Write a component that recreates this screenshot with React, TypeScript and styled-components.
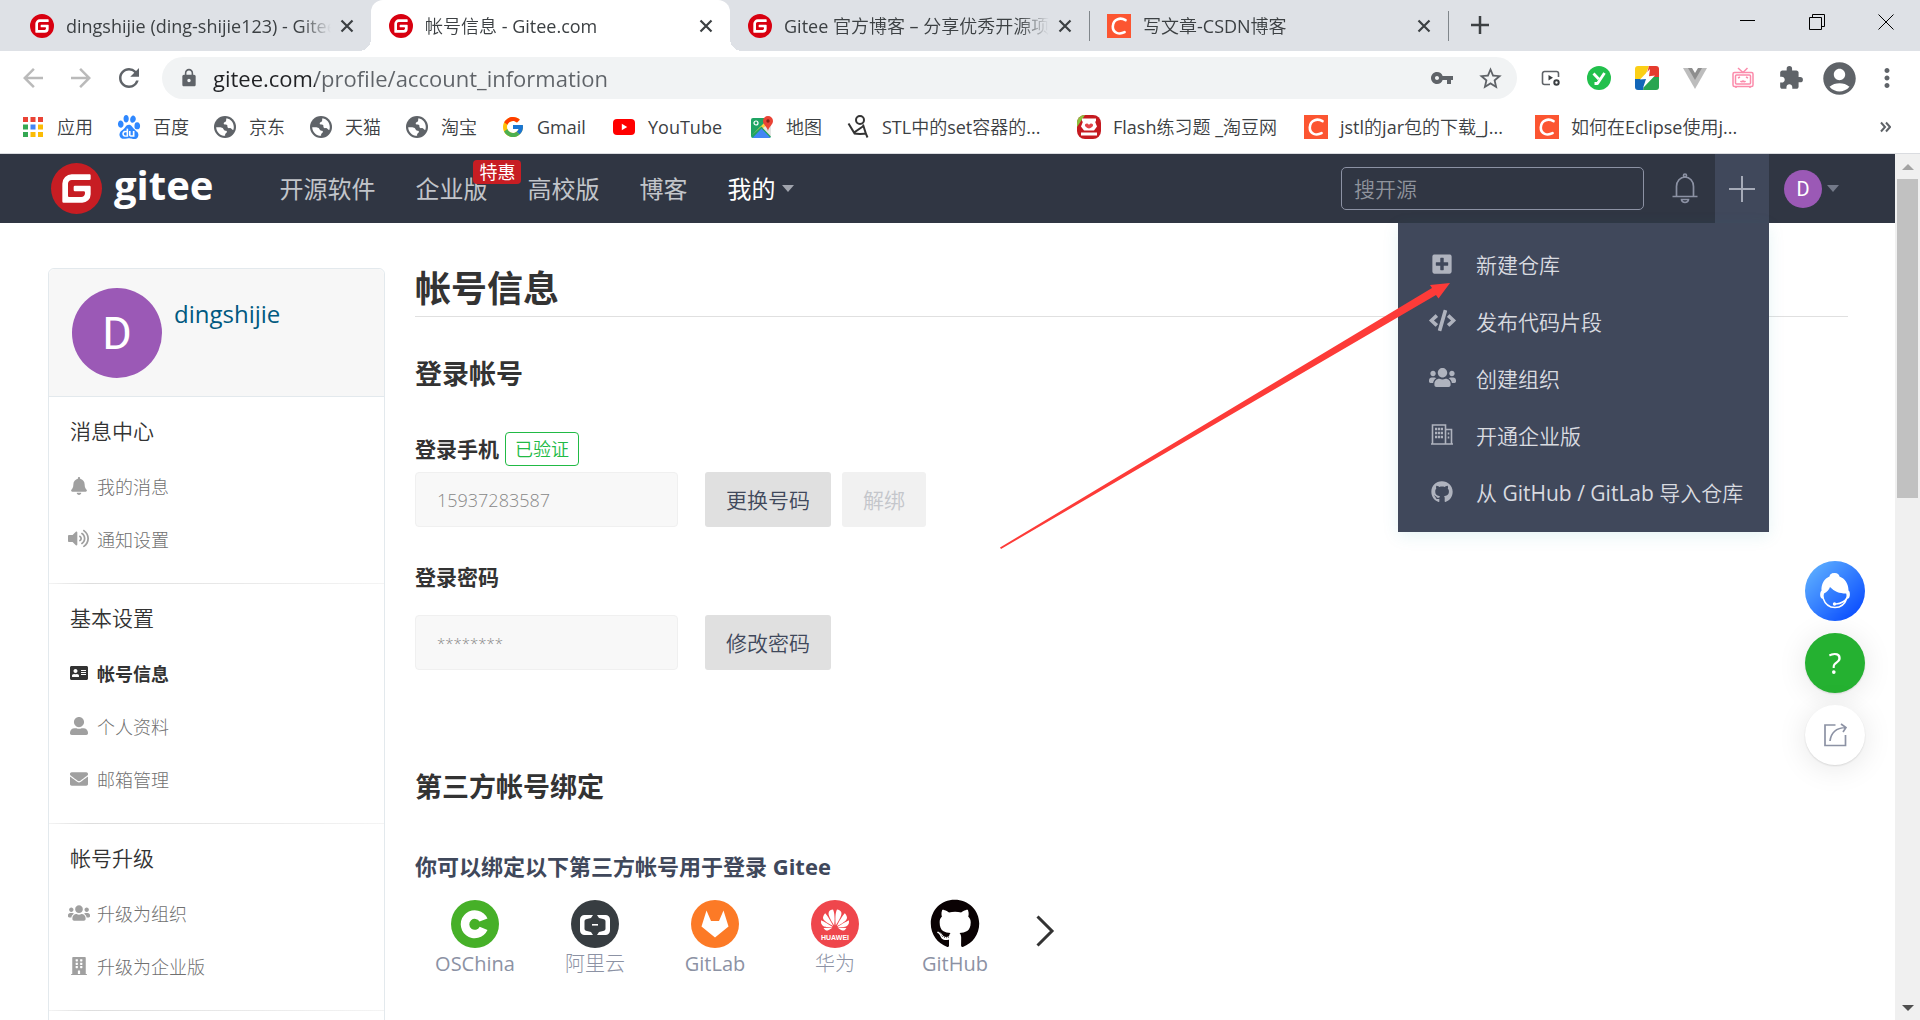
import React from "react";
import styled, { createGlobalStyle } from "styled-components";
import { SiGitee, SiBaidu, SiHuawei } from "react-icons/si";
import {
  FaUsers,
  FaAddressCard,
  FaBuilding,
  FaUserAlt,
  FaGithub,
  FaBell,
  FaVolumeUp,
  FaEnvelope,
  FaPlusSquare,
  FaCode,
} from "react-icons/fa";
import {
  MdArrowBack,
  MdArrowForward,
  MdRefresh,
  MdLock,
  MdVpnKey,
  MdStarBorder,
  MdExtension,
  MdAccountCircle,
  MdMoreVert,
} from "react-icons/md";
import { FcGoogle } from "react-icons/fc";

const REGULAR = '"Open Sans", "Noto Sans CJK SC", sans-serif';
const LIGHT = '"Open Sans", "Noto Sans CJK SC Light", "Noto Sans CJK SC", sans-serif';
const DEMI = '"Open Sans", "Noto Sans CJK SC DemiLight", "Noto Sans CJK SC", sans-serif';

const GlobalStyle = createGlobalStyle`
  *, *::before, *::after { box-sizing: border-box; }
  body { margin: 0; background: #fff; font-family: ${LIGHT}; color: #333; overflow: hidden; }
  button { font: inherit; color: inherit; background: none; border: 0; padding: 0; cursor: pointer; }
  a { color: inherit; text-decoration: none; }
  h1, h2, h3, p, ul { margin: 0; padding: 0; }
  ul { list-style: none; }
  svg { display: block; flex: none; }
`;

const Window = styled.div`
  display: flex;
  flex-direction: column;
  height: 100vh;
`;

/* ---------- browser chrome ---------- */

const TabStrip = styled.div`
  display: flex;
  align-items: stretch;
  height: 51px;
  flex: none;
  padding-left: 12px;
  background: #dee1e6;
  color: #3c4043;
  font-family: ${DEMI};
`;

const Tab = styled.div<{ $active?: boolean }>`
  position: relative;
  display: flex;
  align-items: center;
  flex: 0 1 359px;
  min-width: 0;
  height: 51px;
  padding: 0 14px 0 18px;
  background: ${(p) => (p.$active ? "#fff" : "transparent")};
  border-radius: 12px 12px 0 0;

  &::before,
  &::after {
    content: "";
    display: ${(p) => (p.$active ? "block" : "none")};
    position: absolute;
    bottom: 0;
    width: 12px;
    height: 12px;
  }
  &::before {
    right: 100%;
    background: radial-gradient(circle at 0 0, transparent 12px, #fff 12px);
  }
  &::after {
    left: 100%;
    background: radial-gradient(circle at 100% 0, transparent 12px, #fff 12px);
  }
`;

const TabTitle = styled.button`
  flex: 1;
  min-width: 0;
  margin: 0 6px 0 12px;
  overflow: hidden;
  white-space: nowrap;
  text-align: left;
  font-size: 18px;
  line-height: 28px;
  mask-image: linear-gradient(to left, transparent 0, #000 30px);
`;

const TabClose = styled.button`
  display: grid;
  place-items: center;
  width: 20px;
  height: 20px;
`;

const TabDivider = styled.span`
  width: 1px;
  height: 30px;
  margin: 11px -1px 0 0;
  background: #80868b;
`;

const NewTab = styled.button`
  display: grid;
  place-items: center;
  width: 30px;
  height: 50px;
  margin-left: 17px;
`;

const WindowControls = styled.div`
  display: flex;
  margin-left: auto;
`;

const WindowButton = styled.button`
  display: grid;
  place-items: center;
  width: 69px;
  height: 43px;
`;

const RedC = styled.span`
  display: grid;
  place-items: center;
  flex: none;
  width: 24px;
  height: 24px;
  background: #fc5531;
`;

const GiteeBadge = styled.span<{ $size: number; $color: string }>`
  display: block;
  flex: none;
  color: ${(p) => p.$color};
  background: radial-gradient(circle, #fff 55%, transparent 56%);
  svg {
    width: ${(p) => p.$size}px;
    height: ${(p) => p.$size}px;
  }
`;

const Toolbar = styled.div`
  display: flex;
  align-items: center;
  flex: none;
  height: 54px;
  padding: 0 9px 0 18px;
  color: #5f6368;
`;

const ToolButton = styled.button<{ $dim?: boolean }>`
  display: grid;
  place-items: center;
  width: 48px;
  height: 40px;
  color: ${(p) => (p.$dim ? "#bababa" : "#5f6368")};
`;

const NavButtons = styled.div`
  display: flex;
  margin-left: -9px;
  width: 153px;
`;

const Omnibox = styled.div`
  display: flex;
  align-items: center;
  flex: 1;
  height: 42px;
  padding: 0 3px 0 17px;
  border-radius: 21px;
  background: #f1f3f4;
`;

const Address = styled.input`
  flex: 1;
  min-width: 0;
  height: 36px;
  margin-left: 14px;
  padding: 0;
  border: 0;
  outline: 0;
  font-family: ${LIGHT};
  font-size: 22px;
  color: transparent;
  background: linear-gradient(to right, #202124 102px, #5f6368 102px);
  background-clip: text;
`;

const Extensions = styled.div`
  display: flex;
  align-items: center;
  margin-left: 10px;
`;

const Bookmarks = styled.nav`
  display: flex;
  align-items: center;
  flex: none;
  height: 49px;
  padding: 0 29px 4px 21px;
  border-bottom: 1px solid #dadce0;
  color: #3c4043;
  font-family: ${DEMI};
`;

const Bookmark = styled.a<{ $w: number }>`
  display: flex;
  align-items: center;
  gap: 12px;
  margin-right: 24px;
  font-size: 18px;
  line-height: 28px;
  white-space: nowrap;

  span.label {
    width: ${(p) => p.$w}px;
  }
`;

const IconSlot = styled.span`
  display: grid;
  place-items: center;
  flex: none;
  width: 24px;
  height: 24px;
`;

const Overflow = styled.button`
  margin-left: auto;
`;

/* ---------- page ---------- */

const Viewport = styled.div`
  display: flex;
  flex: 1;
  min-height: 0;
`;

const Page = styled.div`
  flex: 1;
  min-width: 0;
  overflow: hidden;
`;

const Header = styled.header`
  position: relative;
  z-index: 2;
  display: flex;
  align-items: center;
  height: 69px;
  padding-left: 51px;
  background: #303643;
  color: #d0d2d6;
`;

const Brand = styled.a`
  display: flex;
  align-items: center;
  gap: 12px;
  margin-right: 66px;
  color: #fff;
  font-size: 40px;
  font-weight: 700;
  line-height: 51px;
`;

const BrandName = styled.span`
  line-height: 46px;
  padding-bottom: 8px;
`;

const MainNav = styled.nav`
  display: flex;
  flex: 1;
  gap: 40px;
  font-family: ${DEMI};
  font-size: 24px;
  line-height: 69px;
`;

const NavLink = styled.a<{ $strong?: boolean }>`
  position: relative;
  display: flex;
  align-items: center;
  gap: 7px;
  white-space: nowrap;
  font-family: ${REGULAR};
  color: ${(p) => (p.$strong ? "#fff" : "#c2c5ca")};
`;

const Promo = styled.span`
  position: absolute;
  top: 6px;
  left: 58px;
  padding: 0 6px;
  border-radius: 4px;
  background: #c71d23;
  color: #fff;
  font-size: 18px;
  line-height: 24px;
`;

const Caret = styled.span<{ $dim?: boolean }>`
  border: solid transparent;
  border-width: 7px 6px 0;
  border-top-color: ${(p) => (p.$dim ? "#737989" : "#a0a4ad")};
`;

const Search = styled.input`
  width: 303px;
  height: 43px;
  padding: 0 12px;
  border: 1px solid #8c92a4;
  border-radius: 5px;
  outline: 0;
  background: transparent;
  color: #fff;
  font-family: ${DEMI};
  font-size: 21px;
  &::placeholder {
    color: #8f939c;
  }
`;

const BellButton = styled.button`
  margin: 0 17px 0 28px;
  color: #8c92a4;
`;

const CreateMenu = styled.div`
  position: relative;
`;

const PlusButton = styled.button`
  display: grid;
  place-items: center;
  width: 54px;
  height: 69px;
  background: #40485b;
`;

const Dropdown = styled.ul`
  position: absolute;
  top: 100%;
  right: 0;
  padding: 12px 0;
  width: 371px;
  background: #40485b;
  box-shadow: 0 4px 16px rgba(0, 150, 160, 0.1);
`;

const DropdownItem = styled.a`
  display: flex;
  align-items: center;
  gap: 20px;
  height: 57px;
  padding-left: 30px;
  font-family: ${DEMI};
  font-size: 21px;
  color: #d9dbe0;
  white-space: nowrap;
`;

const MenuIcon = styled.span`
  display: grid;
  place-items: center;
  width: 28px;
  color: #afb3be;
`;

const AccountButton = styled.button`
  display: flex;
  align-items: center;
  gap: 5px;
  margin: 0 56px 0 15px;
`;

const Avatar = styled.span<{ $size: number; $font: number }>`
  display: grid;
  place-items: center;
  flex: none;
  width: ${(p) => p.$size}px;
  height: ${(p) => p.$size}px;
  border-radius: 50%;
  background: #9b59b6;
  color: #fff;
  font-family: Roboto, sans-serif;
  font-size: ${(p) => p.$font}px;
  line-height: 1;
`;

const Body = styled.div`
  display: flex;
  align-items: flex-start;
  gap: 30px;
  padding: 45px 47px 0 48px;
`;

const Sidebar = styled.aside`
  flex: none;
  width: 337px;
  padding-bottom: 60px;
  border: 1px solid #e3e9ed;
  border-radius: 6px;
`;

const Profile = styled.div`
  display: flex;
  gap: 12px;
  height: 128px;
  padding: 19px 23px;
  border-bottom: 1px solid #e3e9ed;
  border-radius: 6px 6px 0 0;
  background: #f7f7f7;
`;

const ProfileName = styled.a`
  padding-top: 8px;
  font-size: 24px;
  line-height: 36px;
  color: #005980;
`;

const MenuGroup = styled.section`
  padding: 20px 0 18px 19px;
  border-bottom: 1px solid;
  border-image: linear-gradient(to right, #f4f4f4, #dedede 12%, #f4f4f4) 1;
`;

const GroupTitle = styled.h3`
  margin: 0 0 14px 2px;
  font-family: ${DEMI};
  font-size: 21px;
  font-weight: 400;
  line-height: 28px;
`;

const MenuItem = styled.a<{ $active?: boolean }>`
  display: flex;
  align-items: center;
  gap: 8px;
  height: 53px;
  font-size: 18px;
  font-family: ${(p) => (p.$active ? REGULAR : LIGHT)};
  font-weight: ${(p) => (p.$active ? 700 : 400)};
  color: ${(p) => (p.$active ? "#333" : "#707070")};

  span {
    display: grid;
    place-items: center;
    width: 21px;
    color: ${(p) => (p.$active ? "#333" : "#a0a0a0")};
  }
`;

const Content = styled.main`
  flex: 1;
  min-width: 0;
  font-family: ${REGULAR};
`;

const Title = styled.h1`
  padding-bottom: 6px;
  border-bottom: 1px solid #e0e0e0;
  font-size: 36px;
  line-height: 42px;
`;

const Heading = styled.h2<{ $top: number; $bottom: number }>`
  margin: ${(p) => p.$top}px 0 ${(p) => p.$bottom}px;
  font-size: 27px;
  line-height: 36px;
`;

const FieldLabel = styled.div<{ $gap: number }>`
  display: flex;
  align-items: center;
  gap: 6px;
  height: 34px;
  margin-bottom: ${(p) => p.$gap}px;
  font-size: 21px;
  font-weight: 700;

  label {
    padding-bottom: 2px;
  }
`;

const Verified = styled.span`
  padding: 0 9px;
  border: 1px solid #21ba45;
  border-radius: 4px;
  color: #21ba45;
  font-family: ${DEMI};
  font-size: 18px;
  font-weight: 400;
  line-height: 32px;
`;

const FieldRow = styled.div`
  display: flex;
  gap: 11px;
  margin-bottom: 33px;
`;

const ReadOnlyInput = styled.input<{ $masked?: boolean }>`
  width: 263px;
  height: 55px;
  margin-right: 16px;
  padding: 0 21px;
  border: 1px solid #f0f0f0;
  border-radius: 4px;
  outline: 0;
  background: #f8f8f8;
  color: #888;
  font-family: ${LIGHT};
  font-size: ${(p) => (p.$masked ? 15 : 18)}px;
  font-weight: 300;
`;

const ActionButton = styled.button`
  height: 55px;
  padding: 0 21px 2px;
  border-radius: 3px;
  background: #e0e0e0;
  color: #40485b;
  font-family: ${DEMI};
  font-size: 21px;
  &:disabled {
    background: #f1f1f1;
    color: #c4c6cb;
  }
`;

const Hint = styled.h3`
  margin-bottom: 20px;
  font-size: 22px;
  line-height: 28px;
  color: #40485b;
`;

const Providers = styled.div`
  display: flex;
  align-items: flex-start;
`;

const Provider = styled.a`
  display: flex;
  flex-direction: column;
  align-items: center;
  gap: 2px;
  width: 120px;
  font-family: ${LIGHT};
  font-size: 20px;
  line-height: 28px;
  color: #8c92a4;
`;

const Disc = styled.span<{ $bg: string }>`
  display: flex;
  flex-direction: column;
  align-items: center;
  justify-content: center;
  width: 48px;
  height: 48px;
  border-radius: 50%;
  background: ${(p) => p.$bg};
  color: #fff;
`;

const HuaweiWord = styled.span`
  font-family: "Liberation Sans", sans-serif;
  font-size: 7px;
  font-weight: 700;
  line-height: 8px;
`;

const NextButton = styled.button`
  display: grid;
  place-items: center;
  height: 62px;
  margin-left: 20px;
`;

/* ---------- overlays ---------- */

const FloatingTools = styled.div`
  position: fixed;
  right: 55px;
  top: 561px;
  display: flex;
  flex-direction: column;
  gap: 12px;
`;

const FloatButton = styled.button<{ $bg: string; $shadow?: boolean }>`
  display: grid;
  place-items: center;
  width: 60px;
  height: 60px;
  border-radius: 50%;
  background: ${(p) => p.$bg};
  color: #fff;
  font-family: "Open Sans", sans-serif;
  font-size: 30px;
  line-height: 1;
  box-shadow: ${(p) =>
    p.$shadow ? "0 1px 2px rgba(0,0,0,.12), 0 3px 30px rgba(0,0,0,.1)" : "none"};
`;

const Annotation = styled.svg`
  position: fixed;
  z-index: 5;
  left: 1000px;
  top: 282px;
  pointer-events: none;
`;

const ScrollTrack = styled.div`
  display: flex;
  flex-direction: column;
  justify-content: space-between;
  align-items: center;
  width: 25px;
  background: #f0f0f0;
`;

const ScrollThumb = styled.div`
  width: 21px;
  height: 319px;
  margin: 0 auto;
  background: #c1c1c1;
`;

const ScrollButton = styled.button<{ $down?: boolean }>`
  display: grid;
  place-items: center;
  width: 25px;
  height: 25px;
  &::before {
    content: "";
    border: solid transparent;
    border-width: ${(p) => (p.$down ? "6px 6px 0" : "0 6px 6px")};
    border-top-color: ${(p) => (p.$down ? "#505050" : "transparent")};
    border-bottom-color: ${(p) => (p.$down ? "transparent" : "#a3a3a3")};
  }
`;

/* ---------- drawings ---------- */

const CloseGlyph = () => (
  <svg width="14" height="14" viewBox="0 0 14 14" stroke="#3c4043" strokeWidth="2.2">
    <path d="M1.5 1.5l11 11M12.5 1.5l-11 11" />
  </svg>
);

const CMark = () => (
  <RedC>
    <svg width="24" height="24" viewBox="0 0 24 24" fill="none" stroke="#fff" strokeWidth="2.6">
      <path d="M18.5 6.2C14 3.4 6.4 4.2 5.8 12.3c-.3 7 6.6 8.6 11.8 5.9" strokeLinecap="round" />
    </svg>
  </RedC>
);

const GiteeIcon = () => (
  <GiteeBadge $size={24} $color="#d80010">
    <SiGitee />
  </GiteeBadge>
);

const AppsIcon = () => {
  const colors = ["#ea4335", "#ea4335", "#ea4335", "#34a853", "#4285f4", "#fbbc05", "#34a853", "#fbbc05", "#fbbc05"];
  return (
    <svg width="20" height="20" viewBox="0 0 20 20">
      {colors.map((c, i) => (
        <rect key={i} x={(i % 3) * 7.5} y={Math.floor(i / 3) * 7.5} width="5" height="5" fill={c} />
      ))}
    </svg>
  );
};

const GlobeIcon = () => (
  <svg width="22" height="22" viewBox="0 0 22 22">
    <circle cx="11" cy="11" r="11" fill="#5f6368" />
    <path
      d="M12.5 2.2C16.8 3 19.8 6.6 19.8 11c0 1-.2 2-.5 2.9-1.3-.1-1.4-1.3-2.6-1.7-1-.3-2.3.4-3-.6-.7-1 .2-2-.7-2.7-1.2-.8-3.2.3-3.3-1.5 0-1 1.3-1.1 2-1.8.8-.8.2-2.5.8-3.4z"
      fill="#fff"
    />
    <path
      d="M2.2 11.2c2.3.2 4.9-.5 6.5.9 1 .8.7 2 2 2.3 1 .3 2 0 2.2 1.1.2 1.5-1.7 1.6-1.8 3.1v1.2C6.3 19.9 2.3 16 2.2 11.2z"
      fill="#fff"
    />
  </svg>
);

const YouTubeIcon = () => (
  <svg width="24" height="18" viewBox="0 0 24 18">
    <rect x="1" y="1" width="22" height="16" rx="4" fill="#f00" />
    <path d="M9.8 5.8v6.4l5.4-3.2z" fill="#fff" />
  </svg>
);

const MapsIcon = () => (
  <svg width="24" height="24" viewBox="0 0 24 24">
    <rect x="1" y="3" width="20" height="20" rx="2" fill="#1fa463" />
    <path d="M1 21L19 3h2v18L11.5 11.5z" fill="#fbd043" />
    <path d="M2.5 23L11.5 13.5l9 9.5z" fill="#4285f4" />
    <path d="M13 13l8 8.5V7z" fill="#e4e4e4" />
    <circle cx="6" cy="8" r="2" fill="none" stroke="#fff" strokeWidth="1.2" />
    <path d="M18 1a5 5 0 0 1 5 5c0 4-4 5-5 10-1-5-5-6-5-10a5 5 0 0 1 5-5z" fill="#e94335" />
    <circle cx="18" cy="6" r="1.7" fill="#8a1f16" />
  </svg>
);

const BlogIcon = () => (
  <svg width="24" height="24" viewBox="0 0 24 24" fill="none" stroke="#333" strokeWidth="2">
    <circle cx="14" cy="5" r="4" />
    <path d="M2.5 8.5L8 17.5l9.5-6.5M17 9.5c1.5 4 2 8 4.5 13M8 18.5c4 .7 9 .3 12.5.2" />
  </svg>
);

const DocinIcon = () => (
  <svg width="24" height="24" viewBox="0 0 24 24">
    <rect width="24" height="24" rx="8" fill="#c51a20" />
    <path d="M0 12V8a8 8 0 0 1 8-8z" fill="#8ac23e" />
    <path d="M5 3.5h14v3H5zM6 6.5h12l2 5-3 4H7l-3-4zM4 17.5h16v3H4z" fill="#fff" />
    <path d="M8 9.500c1.500-1.500 3-1 4 .5 1-1.500 2.500-2 4-.5.500 2-2 3.500-4 4-2-.5-4.500-2-4-4z" fill="#e2454a" />
  </svg>
);

const CastIcon = () => (
  <svg width="20" height="18" viewBox="0 0 20 18" fill="none" stroke="#5f6368" strokeWidth="1.6">
    <path d="M9 15.5H3.5a2 2 0 0 1-2-2v-9a2 2 0 0 1 2-2h12a2 2 0 0 1 2 2V8" />
    <path d="M7.5 6v5.5L12 8.8z" fill="#3c4043" stroke="none" />
    <circle cx="15.5" cy="13.5" r="2.2" stroke="#3c4043" strokeWidth="2" />
  </svg>
);

const GreenY = () => (
  <svg width="24" height="24" viewBox="0 0 24 24">
    <circle cx="12" cy="12" r="12" fill="#22c04c" />
    <path d="M6.5 7.5l5.2 5.5M17.5 7l-7 10.5H7.5" fill="none" stroke="#fff" strokeWidth="2.8" strokeLinejoin="round" />
  </svg>
);

const BoltIcon = () => (
  <svg width="24" height="24" viewBox="0 0 24 24">
    <path d="M3 0h11l-5 13H0V3a3 3 0 0 1 3-3z" fill="#fbcf16" />
    <path d="M14 0h7a3 3 0 0 1 3 3v8H11z" fill="#e53b2e" />
    <path d="M0 13h12l-4 11H3a3 3 0 0 1-3-3z" fill="#1266b8" />
    <path d="M12 11h12v10a3 3 0 0 1-3 3H8z" fill="#28a550" />
    <path d="M15 3L5 13.5l6-.5-3 9L20 9.5l-6 .8z" fill="#fff" />
  </svg>
);

const VueIcon = () => (
  <svg width="24" height="21" viewBox="0 0 24 21">
    <path d="M0 0h24L12 21z" fill="#bdbdbd" />
    <path d="M5 0h14l-7 12z" fill="#8e8e8e" />
    <path d="M9 0h6l-3 5z" fill="#fff" />
  </svg>
);

const TvIcon = () => (
  <svg width="22" height="22" viewBox="0 0 22 22" fill="none" stroke="#fb8bab" strokeWidth="1.5">
    <path d="M6 1l5 4.500L15.500 1M4 19v2M18 19v2" />
    <rect x="1" y="5.5" width="20" height="14" rx="1.5" />
    <rect x="3.5" y="8" width="15" height="9" rx="1" />
    <path d="M6 11l2-1M16 11l-2-1M8.5 14c.8 1 1.7 1 2.5 0 .8 1 1.7 1 2.5 0" />
  </svg>
);

const BellOutline = () => (
  <svg width="26" height="31" viewBox="0 0 26 31" fill="none" stroke="currentColor" strokeWidth="1.7">
    <circle cx="13" cy="2.5" r="1.5" />
    <path d="M4.5 23.5v-10a8.500 9.500 0 0 1 17 0v10M.5 23.500h25M9.500 26.500h7a3.500 3 0 0 1-7 0z" />
  </svg>
);

const EnterpriseIcon = () => (
  <svg width="22" height="21" viewBox="0 0 22 21" fill="none" stroke="currentColor" strokeWidth="1.6">
    <path d="M0 20h22M1.500 20V1h13v19M14.500 5.500h6V20" />
    <path d="M4 5h8M4 9h8M4 13h8" strokeWidth="2.4" strokeDasharray="2.2 .7" />
    <path d="M17.500 8.500v2M17.500 12.500v2" />
  </svg>
);

const OscIcon = () => (
  <svg width="48" height="48" viewBox="0 0 48 48">
    <path d="M36.500 18.500A14 14 0 1 0 36.500 30l-7.800-3.200a5.500 5.500 0 1 1-.2-5.300z" fill="#fff" />
  </svg>
);

const AliyunIcon = () => (
  <svg width="48" height="48" viewBox="0 0 48 48" fill="#fff">
    <path d="M22 15H13.500A4.500 4.500 0 0 0 9 19.500v11a4.500 4.500 0 0 0 4.500 4.500H22l-2-3-5-1.200a2 2 0 0 1-1.500-2v-7.600a2 2 0 0 1 1.500-2l5-1.200zM26 15h8.500a4.500 4.500 0 0 1 4.500 4.500v11a4.500 4.500 0 0 1-4.500 4.500H26l2-3 5-1.200a2 2 0 0 0 1.500-2v-7.600a2 2 0 0 0-1.500-2l-5-1.200z" />
    <path d="M21 24h6v1.600h-6z" />
  </svg>
);

const TanukiIcon = () => (
  <svg width="48" height="48" viewBox="0 0 48 48" fill="#fff">
    <path d="M15.500 10.500L20 21h8l4.500-10.500L37.500 26.500 24 37.500 10.500 26.500z" />
  </svg>
);

const AgentIcon = () => (
  <svg width="34" height="38" viewBox="0 0 34 38">
    <path
      d="M11.500 4.500C12 1.500 14.500 1 16.500 1s4.500.7 5 3.500c5.500 2 9 7.500 9 14 1.500.5 2 5.500.5 7.500-1 1-2.500.8-3 0 .8-1.500.5-3.500.2-4.500C21 21.500 16.500 19.500 12 15c-1 3-3 5-6 6.500-.5 1.500-.5 3 0 4.500-.7 1-2.300.8-3-.3-1.300-2-1-6 .5-7C3 12 6.500 6.500 11.500 4.500z"
      fill="#fff"
    />
    <path d="M5 26c2 6 6.500 9.500 12 9.500S27 32 29 26c-2.500 4-6 5.500-11 6" fill="none" stroke="#fff" strokeWidth="1.5" />
    <circle cx="16.5" cy="32" r="1.7" fill="#fff" />
  </svg>
);

const ShareIcon = () => (
  <svg width="24" height="24" viewBox="0 0 24 24" fill="none" stroke="#8c92a4" strokeWidth="1.7">
    <path d="M12.500 2H2v20.500h20.500V12" />
    <path d="M7 18C8 10 13 5 22.500 4.500M18 1l5 3.500-3 4.500" />
  </svg>
);

/* ---------- data ---------- */

const bookmarks = [
  { label: "应用", w: 36, icon: <AppsIcon /> },
  { label: "百度", w: 36, icon: <SiBaidu size={24} color="#2f88ff" /> },
  { label: "京东", w: 36, icon: <GlobeIcon /> },
  { label: "天猫", w: 36, icon: <GlobeIcon /> },
  { label: "淘宝", w: 36, icon: <GlobeIcon /> },
  { label: "Gmail", w: 51, icon: <FcGoogle size={24} /> },
  { label: "YouTube", w: 78, icon: <YouTubeIcon /> },
  { label: "地图", w: 36, icon: <MapsIcon /> },
  { label: "STL中的set容器的...", w: 171, icon: <BlogIcon /> },
  { label: "Flash练习题 _淘豆网", w: 167, icon: <DocinIcon /> },
  { label: "jstl的jar包的下载_J...", w: 171, icon: <CMark /> },
  { label: "如何在Eclipse使用j...", w: 171, icon: <CMark /> },
];

const createItems = [
  { label: "新建仓库", icon: <FaPlusSquare size={22} /> },
  { label: "发布代码片段", icon: <FaCode size={27} /> },
  { label: "创建组织", icon: <FaUsers size={27} /> },
  { label: "开通企业版", icon: <EnterpriseIcon /> },
  { label: "从 GitHub / GitLab 导入仓库", icon: <FaGithub size={22} /> },
];

const groups = [
  {
    title: "消息中心",
    items: [
      { label: "我的消息", icon: <FaBell size={18} /> },
      { label: "通知设置", icon: <FaVolumeUp size={21} /> },
    ],
  },
  {
    title: "基本设置",
    items: [
      { label: "帐号信息", icon: <FaAddressCard size={18} />, active: true },
      { label: "个人资料", icon: <FaUserAlt size={18} /> },
      { label: "邮箱管理", icon: <FaEnvelope size={18} /> },
    ],
  },
  {
    title: "帐号升级",
    items: [
      { label: "升级为组织", icon: <FaUsers size={22} /> },
      { label: "升级为企业版", icon: <FaBuilding size={18} /> },
    ],
  },
];

const providers = [
  { label: "OSChina", bg: "#46b028", icon: <OscIcon /> },
  { label: "阿里云", bg: "#373d41", icon: <AliyunIcon /> },
  { label: "GitLab", bg: "#fc7a26", icon: <TanukiIcon /> },
  {
    label: "华为",
    bg: "#ef464c",
    icon: (
      <>
        <SiHuawei size={28} />
        <HuaweiWord>HUAWEI</HuaweiWord>
      </>
    ),
  },
  { label: "GitHub", bg: "#fff", icon: <FaGithub size={50} color="#0a0203" /> },
];

const tabs = [
  { title: "dingshijie (ding-shijie123) - Gitee.com", icon: <GiteeIcon /> },
  { title: "帐号信息 - Gitee.com", icon: <GiteeIcon />, active: true },
  { title: "Gitee 官方博客 – 分享优秀开源项目", icon: <GiteeIcon />, divider: true },
  { title: "写文章-CSDN博客", icon: <CMark />, divider: true },
];

export default function App() {
  return (
    <Window>
      <GlobalStyle />
      <TabStrip>
        {tabs.map((t) => (
          <React.Fragment key={t.title}>
            <Tab $active={t.active}>
              {t.icon}
              <TabTitle>{t.title}</TabTitle>
              <TabClose aria-label="Close tab">
                <CloseGlyph />
              </TabClose>
            </Tab>
            {t.divider && <TabDivider />}
          </React.Fragment>
        ))}
        <NewTab aria-label="New tab">
          <svg width="18" height="18" viewBox="0 0 18 18" stroke="#3c4043" strokeWidth="2.5">
            <path d="M9 0v18M0 9h18" />
          </svg>
        </NewTab>
        <WindowControls>
          <WindowButton aria-label="Minimize">
            <svg width="15" height="15" viewBox="0 0 15 15" stroke="#000">
              <path d="M0 6.500h15" />
            </svg>
          </WindowButton>
          <WindowButton aria-label="Restore">
            <svg width="16" height="16" viewBox="0 0 16 16" fill="none" stroke="#000">
              <path d="M3.500 3.500v-3h12v12h-3M.5 3.500h12v12H.5z" />
            </svg>
          </WindowButton>
          <WindowButton aria-label="Close">
            <svg width="16" height="16" viewBox="0 0 16 16" stroke="#000">
              <path d="M.5.5l15 15M15.500.5l-15 15" />
            </svg>
          </WindowButton>
        </WindowControls>
      </TabStrip>

      <Toolbar>
        <NavButtons>
          <ToolButton $dim aria-label="Back">
            <MdArrowBack size={30} />
          </ToolButton>
          <ToolButton $dim aria-label="Forward">
            <MdArrowForward size={30} />
          </ToolButton>
          <ToolButton aria-label="Reload">
            <MdRefresh size={30} />
          </ToolButton>
        </NavButtons>
        <Omnibox>
          <MdLock size={20} />
          <Address aria-label="Address" readOnly value="gitee.com/profile/account_information" />
          <ToolButton aria-label="Passwords">
            <MdVpnKey size={24} />
          </ToolButton>
          <ToolButton aria-label="Bookmark this page">
            <MdStarBorder size={27} />
          </ToolButton>
        </Omnibox>
        <Extensions>
          <ToolButton aria-label="Media">
            <CastIcon />
          </ToolButton>
          <ToolButton aria-label="Extension">
            <GreenY />
          </ToolButton>
          <ToolButton aria-label="Downloader">
            <BoltIcon />
          </ToolButton>
          <ToolButton aria-label="Vue devtools">
            <VueIcon />
          </ToolButton>
          <ToolButton aria-label="Video helper">
            <TvIcon />
          </ToolButton>
          <ToolButton aria-label="Extensions">
            <MdExtension size={26} />
          </ToolButton>
          <ToolButton aria-label="Profile">
            <MdAccountCircle size={39} />
          </ToolButton>
          <ToolButton aria-label="More">
            <MdMoreVert size={30} />
          </ToolButton>
        </Extensions>
      </Toolbar>

      <Bookmarks aria-label="Bookmarks">
        {bookmarks.map((b) => (
          <Bookmark key={b.label} href="#" $w={b.w}>
            <IconSlot>{b.icon}</IconSlot>
            <span className="label">{b.label}</span>
          </Bookmark>
        ))}
        <Overflow aria-label="More bookmarks">
          <svg width="11" height="12" viewBox="0 0 11 12" fill="none" stroke="#5f6368" strokeWidth="2">
            <path d="M1 1.500L5 6l-4 4.500M6 1.500L10 6l-4 4.500" />
          </svg>
        </Overflow>
      </Bookmarks>

      <Viewport>
        <Page>
          <Header>
            <Brand href="#">
              <GiteeBadge $size={51} $color="#c71d23">
                <SiGitee />
              </GiteeBadge>
              <BrandName>gitee</BrandName>
            </Brand>
            <MainNav>
              <NavLink href="#">开源软件</NavLink>
              <NavLink href="#">
                企业版<Promo>特惠</Promo>
              </NavLink>
              <NavLink href="#">高校版</NavLink>
              <NavLink href="#">博客</NavLink>
              <NavLink href="#" $strong>
                我的 <Caret />
              </NavLink>
            </MainNav>
            <Search type="search" aria-label="搜开源" placeholder="搜开源" />
            <BellButton aria-label="通知">
              <BellOutline />
            </BellButton>
            <CreateMenu>
              <PlusButton aria-label="新建">
                <svg width="26" height="26" viewBox="0 0 26 26" stroke="#a6abb8" strokeWidth="2">
                  <path d="M13 0v26M0 13h26" />
                </svg>
              </PlusButton>
              <Dropdown>
                {createItems.map((i) => (
                  <li key={i.label}>
                    <DropdownItem href="#">
                      <MenuIcon>{i.icon}</MenuIcon>
                      {i.label}
                    </DropdownItem>
                  </li>
                ))}
              </Dropdown>
            </CreateMenu>
            <AccountButton>
              <Avatar $size={38} $font={20}>
                D
              </Avatar>
              <Caret $dim />
            </AccountButton>
          </Header>

          <Body>
            <Sidebar>
              <Profile>
                <Avatar $size={90} $font={45}>
                  D
                </Avatar>
                <ProfileName href="#">dingshijie</ProfileName>
              </Profile>
              {groups.map((g) => (
                <MenuGroup key={g.title}>
                  <GroupTitle>{g.title}</GroupTitle>
                  {g.items.map((i) => (
                    <MenuItem key={i.label} href="#" $active={"active" in i}>
                      <span>{i.icon}</span>
                      {i.label}
                    </MenuItem>
                  ))}
                </MenuGroup>
              ))}
            </Sidebar>

            <Content>
              <Title>帐号信息</Title>
              <Heading $top={39} $bottom={40}>
                登录帐号
              </Heading>
              <FieldLabel $gap={6}>
                <label htmlFor="phone">登录手机</label>
                <Verified>已验证</Verified>
              </FieldLabel>
              <FieldRow>
                <ReadOnlyInput id="phone" readOnly value="15937283587" />
                <ActionButton>更换号码</ActionButton>
                <ActionButton disabled>解绑</ActionButton>
              </FieldRow>
              <FieldLabel $gap={21}>
                <label htmlFor="password">登录密码</label>
              </FieldLabel>
              <FieldRow>
                <ReadOnlyInput id="password" $masked readOnly value="********" />
                <ActionButton>修改密码</ActionButton>
              </FieldRow>
              <Heading $top={99} $bottom={47}>
                第三方帐号绑定
              </Heading>
              <Hint>你可以绑定以下第三方帐号用于登录 Gitee</Hint>
              <Providers>
                {providers.map((p) => (
                  <Provider key={p.label} href="#">
                    <Disc $bg={p.bg}>{p.icon}</Disc>
                    {p.label}
                  </Provider>
                ))}
                <NextButton aria-label="下一页">
                  <svg width="20" height="32" viewBox="0 0 20 32" fill="none" stroke="#333" strokeWidth="3">
                    <path d="M2.500 1.500L17 16 2.500 30.500" />
                  </svg>
                </NextButton>
              </Providers>
            </Content>
          </Body>
        </Page>
        <ScrollTrack>
          <div>
            <ScrollButton aria-label="Scroll up" />
            <ScrollThumb />
          </div>
          <ScrollButton $down aria-label="Scroll down" />
        </ScrollTrack>
      </Viewport>

      <FloatingTools>
        <FloatButton $bg="linear-gradient(135deg, #5cadff 10%, #0a4dff 90%)" aria-label="客服">
          <AgentIcon />
        </FloatButton>
        <FloatButton $bg="#25b131" $shadow>
          ?
        </FloatButton>
        <FloatButton $bg="#fff" $shadow aria-label="分享">
          <ShareIcon />
        </FloatButton>
      </FloatingTools>

      <Annotation width="452" height="268" viewBox="0 0 452 268">
        <path d="M0 265.500L432 6l-2-3 20-2-11.500 15.500-2.500-3.500L1 267z" fill="#fd3b38" />
      </Annotation>
    </Window>
  );
}
